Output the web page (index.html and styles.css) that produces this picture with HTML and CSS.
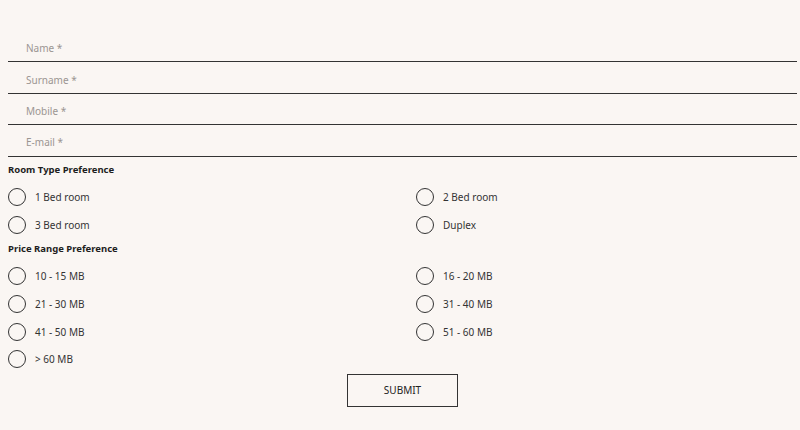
FILE: index.html
```html
<!DOCTYPE html>
<html>
<head>
<meta charset="utf-8">
<link rel="stylesheet" href="styles.css">
</head>
<body>
<form class="form">
  <div class="field"><input type="text" placeholder="Name *"></div>
  <div class="field"><input type="text" placeholder="Surname *"></div>
  <div class="field"><input type="text" placeholder="Mobile *"></div>
  <div class="field"><input type="text" placeholder="E-mail *"></div>

  <h3 class="heading">Room Type Preference</h3>
  <div class="options">
    <label class="option"><span class="radio"></span>1 Bed room</label>
    <label class="option"><span class="radio"></span>2 Bed room</label>
    <label class="option"><span class="radio"></span>3 Bed room</label>
    <label class="option"><span class="radio"></span>Duplex</label>
  </div>

  <h3 class="heading heading-2">Price Range Preference</h3>
  <div class="options options-price">
    <label class="option"><span class="radio"></span>10 - 15 MB</label>
    <label class="option"><span class="radio"></span>16 - 20 MB</label>
    <label class="option"><span class="radio"></span>21 - 30 MB</label>
    <label class="option"><span class="radio"></span>31 - 40 MB</label>
    <label class="option"><span class="radio"></span>41 - 50 MB</label>
    <label class="option"><span class="radio"></span>51 - 60 MB</label>
    <label class="option"><span class="radio"></span>&gt; 60 MB</label>
  </div>

  <div class="actions">
    <button type="button" class="submit">SUBMIT</button>
  </div>
</form>
</body>
</html>
```

FILE: styles.css
```css
html, body {
  margin: 0;
  padding: 0;
  background: #faf6f3;
}
body {
  padding: 31px 3px 0 8px;
  font-family: "Noto Sans", "Open Sans", sans-serif;
  color: #222;
}
.form {
  display: flex;
  flex-direction: column;
}
.field {
  height: 31.4px;
  box-sizing: border-box;
  border-bottom: 1px solid #333;
  display: flex;
  align-items: center;
  padding-top: 4px;
}
.field input {
  border: none;
  background: transparent;
  outline: none;
  width: 100%;
  padding: 0 0 0 18px;
  font-family: inherit;
  font-size: 10px;
  color: #333;
}
.field input::placeholder {
  color: #9a9592;
}
.heading {
  margin: 6px 0 0;
  font-size: 9.5px;
  font-weight: 700;
  line-height: 14px;
  color: #1e1e1e;
}
.heading-2 {
  margin-top: 3px;
}
.options {
  display: grid;
  grid-template-columns: 408px 1fr;
  grid-auto-rows: 28px;
  margin-top: 6px;
}
.options-price {
  grid-auto-rows: 27.6px;
  margin-top: 7px;
}
.option {
  display: flex;
  align-items: center;
  gap: 9px;
  font-size: 10px;
  color: #333;
}
.radio {
  width: 18px;
  height: 18px;
  box-sizing: border-box;
  border: 1px solid #333;
  border-radius: 50%;
  flex: none;
}
.actions {
  display: flex;
  justify-content: center;
  margin-top: 1px;
}
.submit {
  width: 111px;
  height: 33px;
  background: transparent;
  border: 1px solid #333;
  font-family: inherit;
  font-size: 10px;
  color: #222;
  padding: 0;
}
```
